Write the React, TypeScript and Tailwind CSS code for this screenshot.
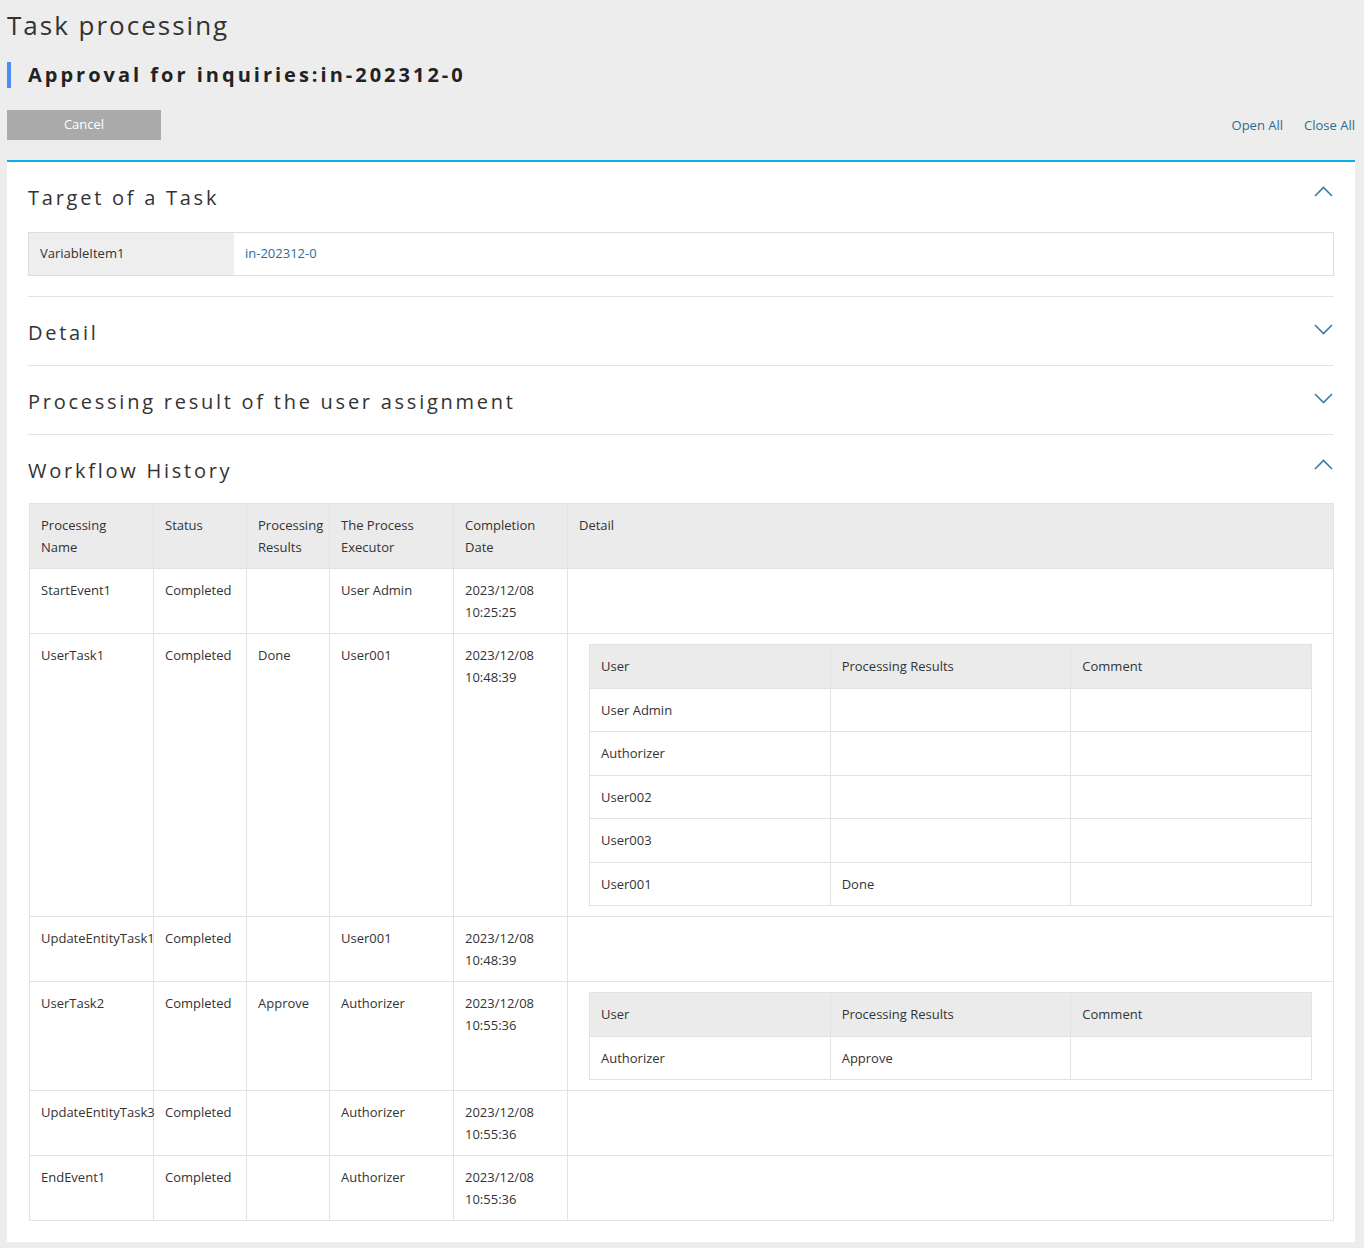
import React from "react";

function Chevron({ up }: { up?: boolean }) {
  return (
    <svg width="19" height="11" viewBox="0 0 19 11" className="block">
      <polyline
        points={up ? "1,10 9.5,1.5 18,10" : "1,1 9.5,9.5 18,1"}
        fill="none"
        stroke="#3b7ba8"
        strokeWidth="1.6"
      />
    </svg>
  );
}

function SectionHeader({ title, up, chevOffset }: { title: string; up?: boolean; chevOffset?: string }) {
  return (
    <div className="h-[68px] pt-1 flex items-center justify-between">
      <h3 className="text-[20px] leading-[30px] tracking-[2.75px] text-[#333] font-normal">{title}</h3>
      <div className={"pr-[1px] " + (chevOffset ?? "")}>
        <Chevron up={up} />
      </div>
    </div>
  );
}

type Row = {
  name: string;
  status: string;
  result: string;
  executor: string;
  date: string;
  time: string;
  detail?: { user: string; result: string; comment: string }[];
};

const rows: Row[] = [
  { name: "StartEvent1", status: "Completed", result: "", executor: "User Admin", date: "2023/12/08", time: "10:25:25" },
  {
    name: "UserTask1",
    status: "Completed",
    result: "Done",
    executor: "User001",
    date: "2023/12/08",
    time: "10:48:39",
    detail: [
      { user: "User Admin", result: "", comment: "" },
      { user: "Authorizer", result: "", comment: "" },
      { user: "User002", result: "", comment: "" },
      { user: "User003", result: "", comment: "" },
      { user: "User001", result: "Done", comment: "" },
    ],
  },
  { name: "UpdateEntityTask1", status: "Completed", result: "", executor: "User001", date: "2023/12/08", time: "10:48:39" },
  {
    name: "UserTask2",
    status: "Completed",
    result: "Approve",
    executor: "Authorizer",
    date: "2023/12/08",
    time: "10:55:36",
    detail: [{ user: "Authorizer", result: "Approve", comment: "" }],
  },
  { name: "UpdateEntityTask3", status: "Completed", result: "", executor: "Authorizer", date: "2023/12/08", time: "10:55:36" },
  { name: "EndEvent1", status: "Completed", result: "", executor: "Authorizer", date: "2023/12/08", time: "10:55:36" },
];

const td = "border border-[#e2e2e2] px-[11px] py-[10px] align-top leading-[22px] whitespace-nowrap overflow-visible";
const th = "border border-[#e2e2e2] px-[11px] py-[10px] align-top leading-[22px] font-normal text-left bg-[#ebebeb]";
const ntd = "border border-[#e2e2e2] px-[11px] py-[10px] align-top leading-[22.5px] whitespace-nowrap";
const nth = "border border-[#e2e2e2] px-[11px] py-[10px] align-top leading-[22.5px] font-normal text-left bg-[#ebebeb]";

function NestedTable({ items }: { items: { user: string; result: string; comment: string }[] }) {
  return (
    <table className="w-full table-fixed border-collapse">
      <thead>
        <tr>
          <th className={nth}>User</th>
          <th className={nth}>Processing Results</th>
          <th className={nth}>Comment</th>
        </tr>
      </thead>
      <tbody>
        {items.map((it, i) => (
          <tr key={i}>
            <td className={ntd}>{it.user}</td>
            <td className={ntd}>{it.result}</td>
            <td className={ntd}>{it.comment}</td>
          </tr>
        ))}
      </tbody>
    </table>
  );
}

export default function App() {
  return (
    <div className="min-h-[1248px] bg-[#ededed] pl-[7px] pr-[9px] pb-[5px] font-['Open_Sans','Noto_Sans',sans-serif] text-[#333]">
      <h1 className="pt-[7px] text-[26px] leading-[36px] tracking-[2px] font-normal text-[#333]">Task processing</h1>
      <div className="mt-[19px] flex items-center h-[26px]">
        <div className="w-[4px] h-[26px] bg-[#4b8cf5]" />
        <h2 className="ml-[17px] text-[20px] leading-[26px] font-bold tracking-[3px] text-[#222]">
          Approval for inquiries:in-202312-0
        </h2>
      </div>
      <div className="mt-[22px] flex items-center justify-between h-[30px]">
        <button className="w-[154px] h-[30px] bg-[#aaaaaa] text-white text-[13px]">Cancel</button>
        <div className="flex gap-[21px] text-[13px] text-[#2e6c95] pt-[2px]">
          <span>Open All</span>
          <span>Close All</span>
        </div>
      </div>

      <div className="mt-[20px] border-t-2 border-[#0eaeec] bg-white px-[21px] pb-[21px] text-[13px]">
        <SectionHeader title="Target of a Task" up chevOffset="-mt-[14px]" />
        <div className="mt-[2px] flex border border-[#dedede] h-[44px]">
          <div className="w-[205px] bg-[#eeeeee] flex items-center pl-[11px]">VariableItem1</div>
          <div className="flex-1 flex items-center pl-[11px] text-[#2a6f9e]">in-202312-0</div>
        </div>
        <div className="h-[20px]" />
        <div className="border-t border-[#e3e3e3]" />

        <SectionHeader title="Detail" chevOffset="-mt-[8px]" />
        <div className="border-t border-[#e3e3e3]" />

        <SectionHeader title="Processing result of the user assignment" chevOffset="-mt-[8px]" />
        <div className="border-t border-[#e3e3e3]" />

        <SectionHeader title="Workflow History" up chevOffset="-mt-[14px]" />

        <table className="ml-px w-[1305px] table-fixed border-collapse">
          <colgroup>
            <col className="w-[124px]" />
            <col className="w-[93px]" />
            <col className="w-[83px]" />
            <col className="w-[124px]" />
            <col className="w-[114px]" />
            <col />
          </colgroup>
          <thead>
            <tr>
              <th className={th}>
                Processing
                <br />
                Name
              </th>
              <th className={th}>Status</th>
              <th className={th + " !pr-0"}>
                Processing
                <br />
                Results
              </th>
              <th className={th}>
                The Process
                <br />
                Executor
              </th>
              <th className={th}>
                Completion
                <br />
                Date
              </th>
              <th className={th}>Detail</th>
            </tr>
          </thead>
          <tbody>
            {rows.map((r, i) => (
              <tr key={i}>
                <td className={td}>{r.name}</td>
                <td className={td}>{r.status}</td>
                <td className={td}>{r.result}</td>
                <td className={td}>{r.executor}</td>
                <td className={td}>
                  {r.date}
                  <br />
                  {r.time}
                </td>
                <td className={r.detail ? "border border-[#e2e2e2] px-[21px] py-[10px] align-top" : td}>
                  {r.detail ? <NestedTable items={r.detail} /> : null}
                </td>
              </tr>
            ))}
          </tbody>
        </table>
      </div>
    </div>
  );
}
